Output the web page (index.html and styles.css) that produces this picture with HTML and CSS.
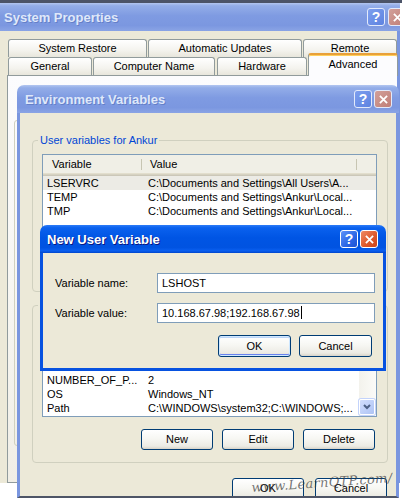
FILE: index.html
```html
<!DOCTYPE html>
<html>
<head>
<meta charset="utf-8">
<title>System Properties</title>
<link rel="stylesheet" href="styles.css">
</head>
<body>
<div class="topstrip"></div>

<div class="win sys">
  <div class="titlebar inactive">
    <span class="title">System Properties</span>
    <div class="tbtns">
      <span class="tb help">?</span>
      <span class="tb close"><svg viewBox="0 0 10 10" width="9" height="9"><path d="M1 1L9 9M9 1L1 9" stroke="#fff" stroke-width="2"/></svg></span>
    </div>
  </div>
  <div class="sys-body">
    <div class="tabrow back">
      <div class="tab w-sr">System Restore</div>
      <div class="tab w-au">Automatic Updates</div>
      <div class="tab w-re">Remote</div>
    </div>
    <div class="tabrow front">
      <div class="tab w-ge">General</div>
      <div class="tab w-cn">Computer Name</div>
      <div class="tab w-hw">Hardware</div>
      <div class="tab sel w-ad">Advanced</div>
    </div>
    <div class="tabpanel"><div class="perf"></div></div>
  </div>
</div>

<div class="win env">
  <div class="titlebar inactive">
    <span class="title">Environment Variables</span>
    <div class="tbtns">
      <span class="tb help">?</span>
      <span class="tb close"><svg viewBox="0 0 10 10" width="9" height="9"><path d="M1 1L9 9M9 1L1 9" stroke="#fff" stroke-width="2"/></svg></span>
    </div>
  </div>
  <div class="env-body">
    <fieldset class="group g1">
      <legend>User variables for Ankur</legend>
      <div class="list l1">
        <div class="list-main">
          <div class="lhead">
            <div class="hcell c1">Variable</div>
            <div class="hcell c2">Value</div>
            <div class="hcell c3"></div>
          </div>
          <div class="row sel"><div class="c1">LSERVRC</div><div class="c2">C:\Documents and Settings\All Users\A...</div></div>
          <div class="row"><div class="c1">TEMP</div><div class="c2">C:\Documents and Settings\Ankur\Local...</div></div>
          <div class="row"><div class="c1">TMP</div><div class="c2">C:\Documents and Settings\Ankur\Local...</div></div>
        </div>
      </div>
      <div class="btnrow covered">
        <div class="btn">New</div>
        <div class="btn">Edit</div>
        <div class="btn">Delete</div>
      </div>
    </fieldset>

    <fieldset class="group g2">
      <legend class="covered">System variables</legend>
      <div class="list l2">
        <div class="list-main">
          <div class="lhead covered">
            <div class="hcell c1">Variable</div>
            <div class="hcell c2">Value</div>
            <div class="hcell c3"></div>
          </div>
          <div class="row covered"><div class="c1">ComSpec</div><div class="c2">C:\WINDOWS\system32\cmd.exe</div></div>
          <div class="row covered"><div class="c1">FP_NO_HOST_C...</div><div class="c2">NO</div></div>
          <div class="row"><div class="c1">NUMBER_OF_P...</div><div class="c2">2</div></div>
          <div class="row"><div class="c1">OS</div><div class="c2">Windows_NT</div></div>
          <div class="row"><div class="c1">Path</div><div class="c2">C:\WINDOWS\system32;C:\WINDOWS;...</div></div>
        </div>
        <div class="vscroll">
          <div class="sarrow up"><svg viewBox="0 0 8 6" width="8" height="6"><path d="M1 5L4 2L7 5" stroke="#4D6185" stroke-width="2" fill="none"/></svg></div>
          <div class="sarrow"><svg viewBox="0 0 8 6" width="8" height="6"><path d="M1 1L4 4L7 1" stroke="#4D6185" stroke-width="2" fill="none"/></svg></div>
        </div>
      </div>
      <div class="btnrow">
        <div class="btn">New</div>
        <div class="btn">Edit</div>
        <div class="btn">Delete</div>
      </div>
    </fieldset>

    <div class="dlgbtns">
      <div class="btn">OK</div>
      <div class="btn">Cancel</div>
    </div>
  </div>
</div>

<div class="win nuv">
  <div class="titlebar active">
    <span class="title">New User Variable</span>
    <div class="tbtns">
      <span class="tb help">?</span>
      <span class="tb close"><svg viewBox="0 0 10 10" width="9" height="9"><path d="M1 1L9 9M9 1L1 9" stroke="#fff" stroke-width="2"/></svg></span>
    </div>
  </div>
  <div class="nuv-body">
    <div class="field">
      <span class="flabel">Variable name:</span>
      <div class="input">LSHOST</div>
    </div>
    <div class="field">
      <span class="flabel">Variable value:</span>
      <div class="input">10.168.67.98;192.168.67.98<span class="caret"></span></div>
    </div>
    <div class="nuvbtns">
      <div class="btn default">OK</div>
      <div class="btn">Cancel</div>
    </div>
  </div>
</div>

<div class="watermark">www.LearnQTP.com/</div>
</body>
</html>
```

FILE: styles.css
```css
* { box-sizing: border-box; }
html, body { margin: 0; padding: 0; }
body {
  width: 402px;
  height: 502px;
  overflow: hidden;
  position: relative;
  background: #fff;
  font-family: "Liberation Sans", Arial, sans-serif;
  font-size: 11px;
  color: #000;
}
.topstrip { height: 3px; background: #4c5468; }
.covered { visibility: hidden; }

.win {
  position: absolute;
  display: flex;
  flex-direction: column;
  overflow: hidden;
}

/* ---------- title bars ---------- */
.titlebar {
  height: 28px;
  flex: none;
  display: flex;
  align-items: center;
  justify-content: space-between;
  border-radius: 7px 7px 0 0;
}
.titlebar.inactive {
  background: linear-gradient(to bottom, #b3c6f0 0%, #93ade8 10%, #7f9be2 45%, #7b97e0 80%, #8aa4e5 100%);
}
.titlebar.active {
  background: linear-gradient(to bottom, #2d7cf7 0%, #0a61ee 10%, #0055e4 45%, #0053e1 80%, #0a5ff0 92%, #0046cc 100%);
}
.title {
  font-weight: bold;
  font-size: 13px;
  white-space: nowrap;
}
.inactive .title { color: #dfe8fa; text-shadow: 1px 1px 0 rgba(70, 95, 170, 0.45); }
.active .title { color: #fff; text-shadow: 1px 1px 0 #0a1883; }

.tbtns { display: flex; gap: 2px; }
.tb {
  width: 18px;
  height: 18px;
  border: 1px solid #fff;
  border-radius: 3px;
  display: flex;
  align-items: center;
  justify-content: center;
  color: #fff;
  font-weight: bold;
  font-size: 14px;
  line-height: 1;
}
.active .tb.help { background: linear-gradient(135deg, #5e93f8 0%, #2b66e6 60%, #1d52d2 100%); }
.active .tb.close { background: linear-gradient(135deg, #ee8a66 0%, #df5a2c 55%, #c9421a 100%); }
.inactive .tb { border-color: #e3eafb; }
.inactive .tb.help { background: linear-gradient(135deg, #7e9fee 0%, #5d82e0 100%); }
.inactive .tb.close { background: linear-gradient(135deg, #d2a09a 0%, #c07e77 100%); }

/* ---------- System Properties ---------- */
.sys { left: 0; top: 3px; width: 400px; height: 480px; }
.sys .titlebar { border-radius: 0; padding-left: 4px; }
.sys .tbtns { margin-right: -6px; gap: 3px; }
.sys-body {
  flex: 1;
  background: #ece9d8;
  border-right: 3px solid #7a96df;
  padding: 8px 0 0 8px;
  display: flex;
  flex-direction: column;
}
.tabrow { display: flex; height: 18px; flex: none; align-items: flex-start; }
.tab {
  height: 18px;
  border: 1px solid #919b9c;
  border-bottom: none;
  border-radius: 3px 3px 0 0;
  background: linear-gradient(to bottom, #ffffff 0%, #f4f3ee 60%, #e8e6dc 100%);
  text-align: center;
  line-height: 17px;
  white-space: nowrap;
  flex: none;
}
.w-sr { width: 139px; }
.w-au { width: 154px; margin-left: 1px; }
.w-re { width: 94px; margin-left: 1px; }
.w-ge { width: 84px; }
.w-cn { width: 122px; margin-left: 1px; }
.w-hw { width: 90px; margin-left: 2px; }
.w-ad { width: 90px; margin-left: 1px; }
.tab.sel {
  height: 23px;
  margin-top: -4px;
  position: relative;
  z-index: 1;
  background: #fcfcfe;
  border-top: 2px solid #e8a03a;
  box-shadow: inset 0 1px 0 #ffcf5c;
  padding-top: 1px;
  line-height: 17px;
}
.tabpanel {
  flex: 1;
  margin-left: -1px;
  border: 1px solid #919b9c;
  border-right: none;
  background: linear-gradient(to bottom, #fcfcfe 0%, #f6f5f0 60%, #f0eee6 100%);
}
.perf {
  margin: 44px 0 0 6px;
  height: 326px;
  border: 1px solid #d0d0bf;
  border-radius: 3px;
}

/* ---------- Environment Variables ---------- */
.env { left: 17px; top: 85px; width: 382px; height: 413px; }
.env .titlebar { padding: 0 7px 0 8px; }
.env-body {
  flex: 1;
  min-height: 0;
  overflow: hidden;
  background: #ece9d8;
  border-left: 3px solid #7a96df;
  border-right: 3px solid #7a96df;
  border-bottom: 2px solid #4e5566;
  padding: 21px 8px 0 12px;
}
.group {
  margin: 0;
  padding: 7px 10px 12px 9px;
  border: 1px solid #d0d0bf;
  border-radius: 4px;
  min-width: 0;
}
.group.g2 { margin-top: 7px; padding-top: 11px; }
.group legend {
  color: #0046d5;
  padding: 0 2px;
  margin-left: -4px;
  line-height: 13px;
  font-size: 11px;
}

.list {
  border: 1px solid #7f9db9;
  background: #fff;
  display: flex;
  overflow: hidden;
}
.l1 { height: 96px; }
.l2 { height: 94px; }
.list-main { flex: 1; min-width: 0; }
.lhead {
  display: flex;
  height: 21px;
  background: #f0efe6;
  box-shadow: inset 0 -1px 0 #cbc7b8, inset 0 -2px 0 #d6d2c2, inset 0 -3px 0 #e2decd;
}
.hcell {
  position: relative;
  line-height: 19px;
  white-space: nowrap;
  flex: none;
}
.hcell::after {
  content: "";
  position: absolute;
  right: 0;
  top: 4px;
  bottom: 6px;
  width: 1px;
  background: #c7c5b2;
}
.hcell.c3 { flex: 1; }
.hcell.c3::after { display: none; }
.c1 { width: 99px; flex: none; }
.c2 { width: 215px; flex: none; }
.hcell.c1 { padding-left: 9px; }
.hcell.c2 { padding-left: 8px; }
.row {
  display: flex;
  height: 14px;
  line-height: 14px;
  white-space: nowrap;
}
.row .c1 { padding-left: 4px; overflow: hidden; }
.row .c2 { padding-left: 6px; overflow: hidden; }
.row.sel { background: #ecebe5; }

.vscroll {
  width: 17px;
  flex: none;
  background: linear-gradient(to right, #f3f2ec, #fbfbf8);
  display: flex;
  flex-direction: column;
  justify-content: space-between;
}
.sarrow {
  height: 16px;
  margin: 0 1px 1px 0;
  border: 1px solid #fff;
  border-radius: 2px;
  background: linear-gradient(135deg, #d2defc 0%, #bccef8 60%, #aec3f3 100%);
  box-shadow: 0 0 0 1px #c3d3fb;
  display: flex;
  align-items: center;
  justify-content: center;
}

.btnrow {
  display: flex;
  justify-content: flex-end;
  gap: 9px;
  margin: 8px 2px 0 0;
}
.g2 .btnrow { margin-top: 12px; }
.btn {
  width: 72px;
  height: 21px;
  border: 1px solid #003c74;
  border-radius: 3px;
  background: linear-gradient(to bottom, #ffffff 0%, #f7f7f3 45%, #ecebe4 85%, #d8d3c8 100%);
  text-align: center;
  line-height: 19px;
  flex: none;
}
.dlgbtns {
  display: flex;
  justify-content: flex-end;
  gap: 11px;
  margin: 15px 1px 0 0;
}
.dlgbtns .btn { height: 22px; }

/* ---------- New User Variable ---------- */
.nuv { left: 40px; top: 225px; width: 346px; height: 146px; }
.nuv .titlebar { padding: 0 8px 0 7px; }
.nuv-body {
  flex: 1;
  background: #ece9d8;
  border: 3px solid #0752e0;
  border-top: none;
  padding: 20px 8px 0 12px;
}
.field { display: flex; align-items: center; height: 20px; }
.field + .field { margin-top: 10px; }
.flabel { width: 102px; flex: none; white-space: nowrap; }
.input {
  flex: 1;
  height: 20px;
  border: 1px solid #7f9db9;
  background: #fff;
  padding-left: 4px;
  line-height: 18px;
  white-space: nowrap;
}
.caret {
  display: inline-block;
  width: 1px;
  height: 13px;
  background: #000;
  vertical-align: -2px;
  margin-left: 1px;
}
.nuvbtns {
  display: flex;
  justify-content: flex-end;
  gap: 8px;
  margin: 12px 3px 0 0;
}
.nuvbtns .btn { width: 73px; height: 22px; line-height: 20px; }
.btn.default {
  box-shadow: inset 0 0 0 1px #cee7ff, inset 0 -2px 0 #6982ee, inset 0 2px 0 #bcd4f6;
}

/* ---------- watermark ---------- */
.watermark {
  position: absolute;
  left: 252px;
  top: 480px;
  font-family: "DejaVu Serif", serif;
  font-style: italic;
  font-size: 13px;
  letter-spacing: 0.3px;
  color: rgba(60, 60, 60, 0.72);
  transform: rotate(-4deg);
  transform-origin: left bottom;
  white-space: nowrap;
}
```
